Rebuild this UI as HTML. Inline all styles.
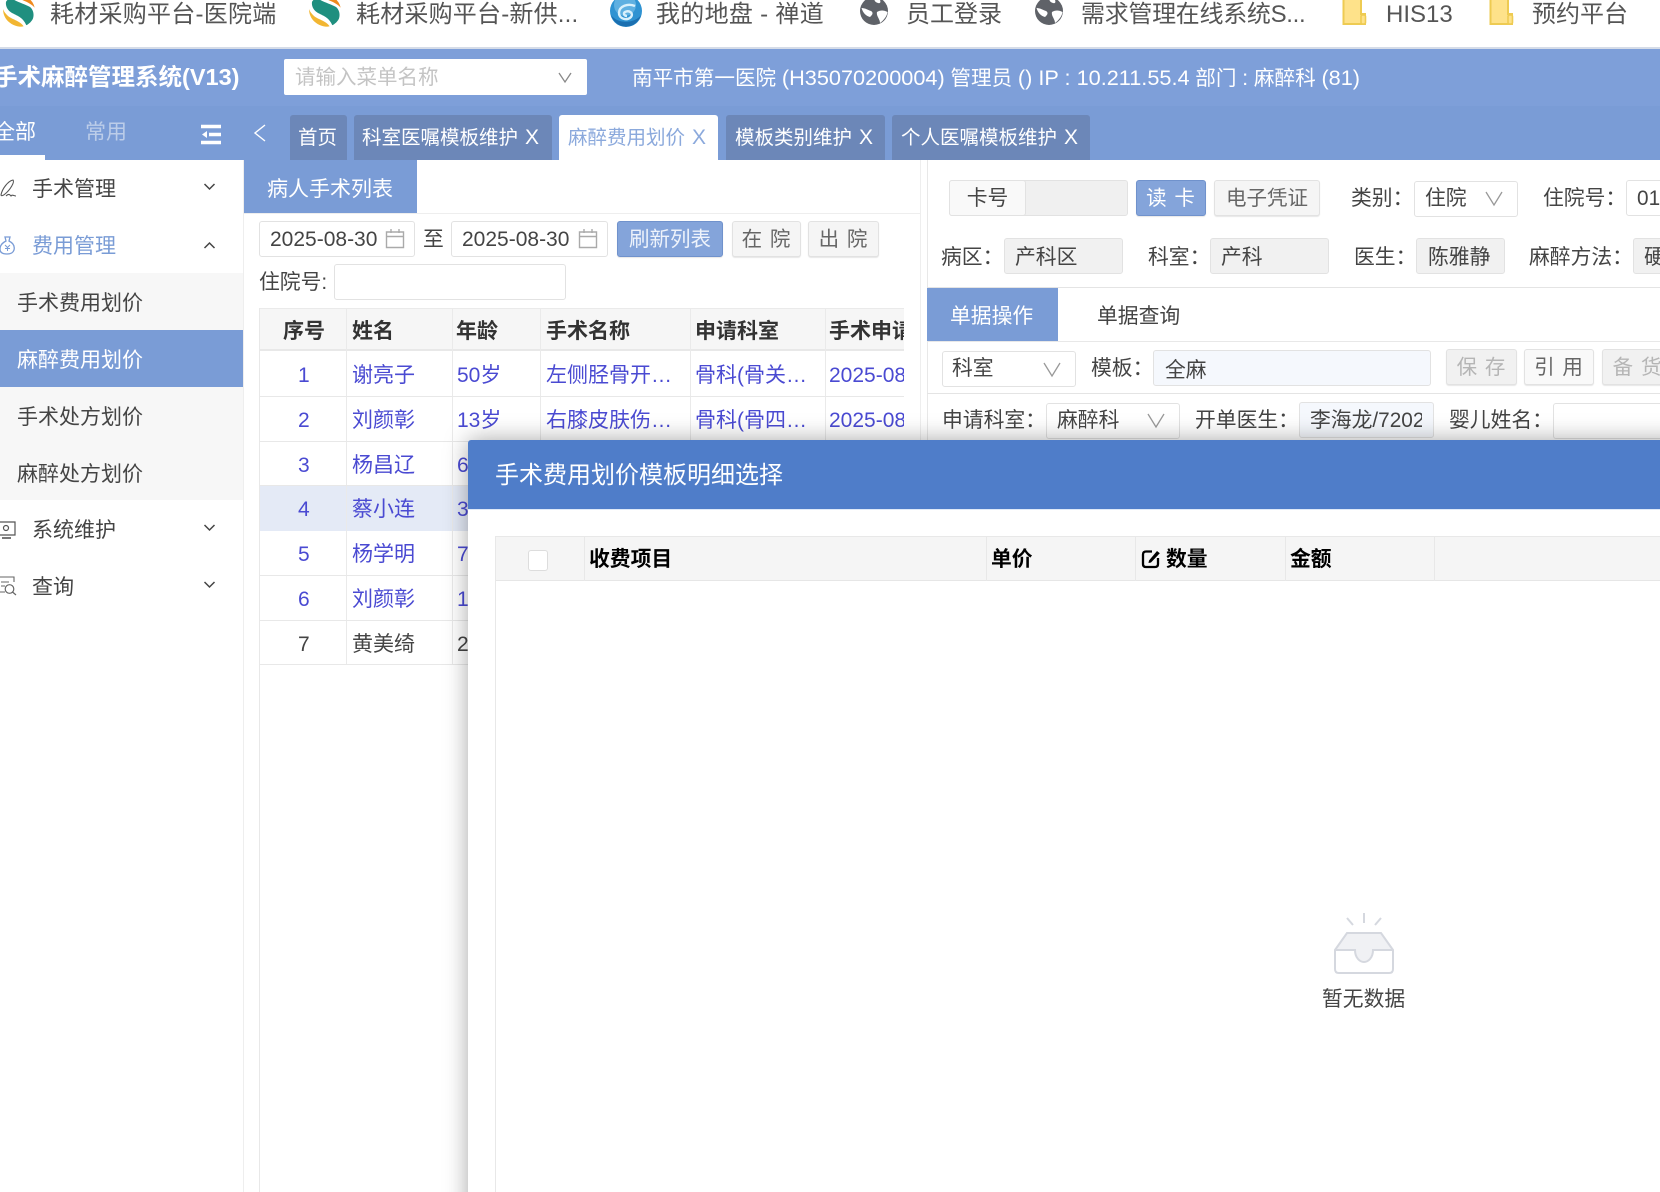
<!DOCTYPE html>
<html><head><meta charset="utf-8"><style>
*{box-sizing:border-box}
html,body{margin:0;padding:0;width:1660px;height:1192px;overflow:hidden;background:#fff}
body{position:relative;font-family:"Liberation Sans","Noto Sans CJK SC",sans-serif;font-size:20px;color:#444}
.a,.t,.b,svg{position:absolute}
.t{white-space:nowrap;line-height:30px;height:30px}
.b{border:1px solid #e2e2e2;border-radius:3px;background:#fff}
.g{background:#f1f1f1}
.f{background:#f5f8fd}
.bk{font-size:24px;color:#555;top:0}
.tab{position:absolute;top:115px;height:45px;background:#6c87b8;border-radius:3px 3px 0 0;color:#fff;line-height:32px;padding-top:7px;white-space:nowrap;font-size:19.5px}
.x{position:absolute;top:7px;font-size:21px;line-height:32px}
.th{font-weight:bold;color:#333;font-size:21px}
.c{font-size:21px;color:#4a4ad2}
.d{color:#444}
.m{font-weight:bold;color:#000;font-size:20.8px}
.s{font-size:21px;color:#444}
.l{font-size:20.8px;color:#444}
.btn{text-align:center;font-size:20.5px;line-height:35px;box-shadow:0 1px 1px rgba(0,0,0,.1);white-space:nowrap}
.la{font-size:21.7px}
</style></head><body>

<!-- bookmark bar -->
<svg style="left:3px;top:-5px" width="32" height="32" viewBox="0 0 32 32"><defs><clipPath id="cl"><circle cx="16" cy="16" r="16"/></clipPath></defs><g clip-path="url(#cl)"><rect width="32" height="32" fill="#fff"/><path d="M8 0H32V13C27 7 18 5 8 0Z" fill="#ef8a1e"/><path d="M6 1C1 6 2 14 9 18C15 21 21 23 24 32C31 27 33 17 27 12C20 8 12 7 6 1Z" fill="#1f8f7f"/><path d="M0 14C0 24 8 32 21 32C18 26 10 25 5 21C3 19 1 17 0 14Z" fill="#f2b632"/></g></svg>
<svg style="left:309px;top:-5px" width="32" height="32" viewBox="0 0 32 32"><defs><clipPath id="cm"><circle cx="16" cy="16" r="16"/></clipPath></defs><g clip-path="url(#cm)"><rect width="32" height="32" fill="#fff"/><path d="M8 0H32V13C27 7 18 5 8 0Z" fill="#ef8a1e"/><path d="M6 1C1 6 2 14 9 18C15 21 21 23 24 32C31 27 33 17 27 12C20 8 12 7 6 1Z" fill="#1f8f7f"/><path d="M0 14C0 24 8 32 21 32C18 26 10 25 5 21C3 19 1 17 0 14Z" fill="#f2b632"/></g></svg>
<svg style="left:610px;top:-5px" width="32" height="32" viewBox="0 0 32 32"><circle cx="16" cy="16" r="16" fill="#2f93d2"/><circle cx="15" cy="10" r="11" fill="#86c8ec" opacity=".55"/><path d="M25 11C18 8 9 11 9 18C9 24 17 26 21 22C24 18 19 15 15 17C13 18 14 21 17 21" fill="none" stroke="#d8f0fb" stroke-width="2.4"/><path d="M1 20A15.5 15.5 0 0 0 31 20C26 28 8 30 1 20Z" fill="#1b6fb0"/></svg>
<svg style="left:860px;top:-3px" width="28" height="28" viewBox="0 0 28 28"><circle cx="14" cy="14" r="14" fill="#5f6268"/><path d="M16 0.5C13 3 15 5 18 6C21 7 21 4 19 1ZM1.5 11C5 11 8 13 11 14C14 16 12 18 10 20C6 19 3 16 1.5 11ZM17 15C20 13 24 13 27.5 15C27 19 24 23 20 26C20 22 16 19 17 15Z" fill="#fff"/></svg>
<svg style="left:1035px;top:-3px" width="28" height="28" viewBox="0 0 28 28"><circle cx="14" cy="14" r="14" fill="#5f6268"/><path d="M16 0.5C13 3 15 5 18 6C21 7 21 4 19 1ZM1.5 11C5 11 8 13 11 14C14 16 12 18 10 20C6 19 3 16 1.5 11ZM17 15C20 13 24 13 27.5 15C27 19 24 23 20 26C20 22 16 19 17 15Z" fill="#fff"/></svg>
<svg style="left:1342px;top:-2px" width="25" height="27" viewBox="0 0 25 27"><path d="M1.5 0V26H23V16H19V0Z" fill="#fee28a" stroke="#eecb52" stroke-width="2"/><rect x="19" y="17" width="4.5" height="9" rx="1.5" fill="#fee28a" stroke="#eecb52" stroke-width="1.6"/></svg>
<svg style="left:1489px;top:-2px" width="25" height="27" viewBox="0 0 25 27"><path d="M1.5 0V26H23V16H19V0Z" fill="#fee28a" stroke="#eecb52" stroke-width="2"/><rect x="19" y="17" width="4.5" height="9" rx="1.5" fill="#fee28a" stroke="#eecb52" stroke-width="1.6"/></svg>
<div class="t bk" style="left:50px;letter-spacing:.25px">耗材采购平台-医院端</div>
<div class="t bk" style="left:356px;letter-spacing:.2px">耗材采购平台-新供...</div>
<div class="t bk" style="left:656px;letter-spacing:.3px">我的地盘 - 禅道</div>
<div class="t bk" style="left:906px">员工登录</div>
<div class="t bk" style="left:1081px;letter-spacing:-.3px">需求管理在线系统S...</div>
<div class="t bk" style="left:1386px">HIS13</div>
<div class="t bk" style="left:1532px">预约平台</div>

<!-- header -->
<div class="a" style="left:0;top:47px;width:1660px;height:2px;background:#d5dce8"></div>
<div class="a" style="left:0;top:49px;width:1660px;height:57px;background:#7e9fd9"></div>
<div class="a" style="left:0;top:106px;width:1660px;height:54px;background:#7a9cd6"></div>
<div class="t" style="left:-6px;top:62px;color:#fff;font-weight:bold;font-size:23.5px">手术麻醉管理系统(V13)</div>
<div class="a" style="left:284px;top:59px;width:303px;height:36px;background:#fff;border-radius:2px"></div>
<div class="t" style="left:295px;top:63px;color:#c4c4c4;font-size:20.5px">请输入菜单名称</div>
<svg style="left:557px;top:69px" width="16" height="16" viewBox="0 0 16 16"><path d="M2 4L8 13L14 4" fill="none" stroke="#888" stroke-width="1.3"/></svg>
<div class="t" style="left:632px;top:63px;color:#fff;font-size:20.6px">南平市第一医院 <span class="la">(H35070200004)</span> 管理员 <span class="la">() IP : 10.211.55.4</span> 部门 <span class="la">:</span> 麻醉科 <span class="la">(81)</span></div>

<!-- side tabs -->
<div class="t" style="left:-6px;top:118px;color:#fff;font-size:21px">全部</div>
<div class="t" style="left:85px;top:118px;color:#bccde9;font-size:21px">常用</div>
<div class="a" style="left:0;top:155px;width:45px;height:5px;background:#fff"></div>
<svg style="left:200px;top:124px" width="22" height="21" viewBox="0 0 22 21"><path d="M1 2.5H21M9 10.5H21M1 18.5H21" stroke="#fff" stroke-width="3.4"/><path d="M7 7V14L2 10.5Z" fill="#fff"/></svg>
<svg style="left:253px;top:124px" width="14" height="18" viewBox="0 0 14 18"><path d="M12 1L2 9L12 17" fill="none" stroke="#fff" stroke-width="1.4"/></svg>

<!-- tabs -->
<div class="tab" style="left:290px;width:57px;padding-left:8px">首页</div>
<div class="tab" style="left:354px;width:198px;padding-left:8px">科室医嘱模板维护<span class="x" style="left:171px">X</span></div>
<div class="tab" style="left:559px;width:159px;padding-left:9px;background:#fff;color:#8ba9dc">麻醉费用划价<span class="x" style="left:133px">X</span></div>
<div class="tab" style="left:726px;width:159px;padding-left:9px">模板类别维护<span class="x" style="left:133px">X</span></div>
<div class="tab" style="left:892px;width:198px;padding-left:9px">个人医嘱模板维护<span class="x" style="left:172px">X</span></div>

<!-- sidebar -->
<div class="a" style="left:243px;top:160px;width:1px;height:1032px;background:#eee"></div>
<div class="a" style="left:0;top:273px;width:243px;height:227px;background:#f7f7f7"></div>
<div class="a" style="left:0;top:330px;width:243px;height:57px;background:#7a9cd6"></div>
<svg style="left:0;top:178px" width="17" height="20" viewBox="0 0 17 20"><path d="M1 17C2 11 8 3 13 2C15 4 10 12 5 16C3 18 1 18 1 17ZM6 18C9 15 10 17 11 18C12 16 14 18 16 18" fill="none" stroke="#555" stroke-width="1.1"/></svg>
<svg style="left:-1px;top:235px" width="17" height="20" viewBox="0 0 17 20"><path d="M6 2H11L10 6C14 8 16 11 15 15C14 18 12 19 8 19C4 19 1 18 1 14C1 11 3 8 7 6Z" fill="none" stroke="#7a9cd6" stroke-width="1.3"/><path d="M6 10L8.5 12.5L11 10M8.5 12.5V16M6 13.5H11" fill="none" stroke="#7a9cd6" stroke-width="1"/></svg>
<svg style="left:0;top:520px" width="17" height="20" viewBox="0 0 17 20"><path d="M-2 2H15V15H-2Z" fill="none" stroke="#555" stroke-width="1.2"/><circle cx="6" cy="8" r="2.5" fill="none" stroke="#555" stroke-width="1.2"/><path d="M2 18H11" stroke="#555" stroke-width="1.6"/></svg>
<svg style="left:0;top:575px" width="17" height="22" viewBox="0 0 17 22"><path d="M-2 2H14V7M-2 2V17H5M1 7H9M1 11H5" fill="none" stroke="#666" stroke-width="1.1"/><circle cx="9.5" cy="14" r="4.3" fill="none" stroke="#666" stroke-width="1.2"/><path d="M12.5 17L16 20" stroke="#666" stroke-width="1.2"/></svg>
<div class="t s" style="left:32px;top:175px">手术管理</div>
<div class="t s" style="left:32px;top:232px;color:#7a9cd6">费用管理</div>
<div class="t s" style="left:17px;top:289px">手术费用划价</div>
<div class="t s" style="left:17px;top:346px;color:#fff">麻醉费用划价</div>
<div class="t s" style="left:17px;top:403px">手术处方划价</div>
<div class="t s" style="left:17px;top:460px">麻醉处方划价</div>
<div class="t s" style="left:32px;top:516px">系统维护</div>
<div class="t s" style="left:32px;top:573px">查询</div>
<svg style="left:203px;top:182px" width="13" height="10" viewBox="0 0 13 10"><path d="M1.5 2L6.5 7L11.5 2" fill="none" stroke="#444" stroke-width="1.5"/></svg>
<svg style="left:203px;top:240px" width="13" height="10" viewBox="0 0 13 10"><path d="M1.5 8L6.5 3L11.5 8" fill="none" stroke="#444" stroke-width="1.5"/></svg>
<svg style="left:203px;top:523px" width="13" height="10" viewBox="0 0 13 10"><path d="M1.5 2L6.5 7L11.5 2" fill="none" stroke="#444" stroke-width="1.5"/></svg>
<svg style="left:203px;top:580px" width="13" height="10" viewBox="0 0 13 10"><path d="M1.5 2L6.5 7L11.5 2" fill="none" stroke="#444" stroke-width="1.5"/></svg>

<!-- left panel -->
<div class="a" style="left:244px;top:160px;width:173px;height:54px;background:#7a9cd6"></div>
<div class="t" style="left:267px;top:175px;color:#fff;font-size:21px">病人手术列表</div>
<div class="a" style="left:244px;top:213px;width:676px;height:1px;background:#eee"></div>
<div class="a" style="left:920px;top:160px;width:1px;height:300px;background:#eee"></div>
<div class="a" style="left:927px;top:160px;width:1px;height:300px;background:#e8e8e8"></div>

<div class="b" style="left:259px;top:221px;width:156px;height:36px"></div>
<div class="t" style="left:270px;top:225px;font-size:21px">2025-08-30</div>
<svg style="left:385px;top:228px" width="20" height="21" viewBox="0 0 20 21"><path d="M1.5 4H18.5V19.5H1.5ZM1.5 8.5H18.5M6 1V5M14 1V5" fill="none" stroke="#aaa" stroke-width="1.4"/></svg>
<div class="t l" style="left:423px;top:225px">至</div>
<div class="b" style="left:451px;top:221px;width:157px;height:36px"></div>
<div class="t" style="left:462px;top:225px;font-size:21px">2025-08-30</div>
<svg style="left:578px;top:228px" width="20" height="21" viewBox="0 0 20 21"><path d="M1.5 4H18.5V19.5H1.5ZM1.5 8.5H18.5M6 1V5M14 1V5" fill="none" stroke="#aaa" stroke-width="1.4"/></svg>
<div class="b btn" style="left:617px;top:221px;width:106px;height:36px;background:#84a4da;border-color:#7092cc;color:#eef3fb">刷新列表</div>
<div class="b btn" style="left:732px;top:221px;width:69px;height:36px;background:#f5f5f5;color:#666;letter-spacing:1px">在 院</div>
<div class="b btn" style="left:808px;top:221px;width:71px;height:36px;background:#f5f5f5;color:#666;letter-spacing:1px">出 院</div>
<div class="t l" style="left:259px;top:268px">住院号:</div>
<div class="b" style="left:334px;top:264px;width:232px;height:36px"></div>

<!-- table -->
<div class="a" style="left:259px;top:308px;width:645px;height:43px;background:#f6f6f6;border-top:1px solid #eaeaea;border-bottom:2px solid #e8e8e8"></div>
<div class="a" style="left:259px;top:486px;width:645px;height:45px;background:#e4eaf6"></div>
<div class="a" style="left:259px;top:308px;width:1px;height:884px;background:#e8e8e8"></div>
<div class="a" style="left:346px;top:308px;width:1px;height:356px;background:#eaeaea"></div>
<div class="a" style="left:452px;top:308px;width:1px;height:356px;background:#eaeaea"></div>
<div class="a" style="left:540px;top:308px;width:1px;height:133px;background:#eaeaea"></div>
<div class="a" style="left:690px;top:308px;width:1px;height:133px;background:#eaeaea"></div>
<div class="a" style="left:825px;top:308px;width:1px;height:133px;background:#eaeaea"></div>
<div class="a" style="left:259px;top:396px;width:645px;height:1px;background:#e8e8e8"></div>
<div class="a" style="left:259px;top:441px;width:645px;height:1px;background:#e8e8e8"></div>
<div class="a" style="left:259px;top:485px;width:645px;height:1px;background:#e8e8e8"></div>
<div class="a" style="left:259px;top:575px;width:645px;height:1px;background:#e8e8e8"></div>
<div class="a" style="left:259px;top:620px;width:645px;height:1px;background:#e8e8e8"></div>
<div class="a" style="left:259px;top:664px;width:645px;height:1px;background:#e8e8e8"></div>

<div class="t th" style="left:283px;top:317px">序号</div>
<div class="t th" style="left:352px;top:317px">姓名</div>
<div class="t th" style="left:456px;top:317px">年龄</div>
<div class="t th" style="left:546px;top:317px">手术名称</div>
<div class="t th" style="left:695px;top:317px">申请科室</div>
<div class="a" style="left:829px;top:317px;width:75px;height:30px;overflow:hidden"><div class="t th" style="left:0;top:0">手术申请</div></div>

<div class="t c" style="left:298px;top:361px">1</div><div class="t c" style="left:352px;top:361px">谢亮子</div><div class="t c" style="left:457px;top:361px">50岁</div><div class="t c" style="left:546px;top:361px">左侧胫骨开…</div><div class="t c" style="left:695px;top:361px">骨科(骨关…</div>
<div class="a" style="left:829px;top:361px;width:75px;height:30px;overflow:hidden"><div class="t c" style="left:0;top:0">2025-08-30</div></div>
<div class="t c" style="left:298px;top:406px">2</div><div class="t c" style="left:352px;top:406px">刘颜彰</div><div class="t c" style="left:457px;top:406px">13岁</div><div class="t c" style="left:546px;top:406px">右膝皮肤伤…</div><div class="t c" style="left:695px;top:406px">骨科(骨四…</div>
<div class="a" style="left:829px;top:406px;width:75px;height:30px;overflow:hidden"><div class="t c" style="left:0;top:0">2025-08-30</div></div>
<div class="t c" style="left:298px;top:451px">3</div><div class="t c" style="left:352px;top:451px">杨昌辽</div><div class="t c" style="left:457px;top:451px">6</div>
<div class="t c" style="left:298px;top:495px">4</div><div class="t c" style="left:352px;top:495px">蔡小连</div><div class="t c" style="left:457px;top:495px">3</div>
<div class="t c" style="left:298px;top:540px">5</div><div class="t c" style="left:352px;top:540px">杨学明</div><div class="t c" style="left:457px;top:540px">7</div>
<div class="t c" style="left:298px;top:585px">6</div><div class="t c" style="left:352px;top:585px">刘颜彰</div><div class="t c" style="left:457px;top:585px">1</div>
<div class="t c d" style="left:298px;top:630px">7</div><div class="t c d" style="left:352px;top:630px">黄美绮</div><div class="t c d" style="left:457px;top:630px">2</div>

<!-- right panel row 1 -->
<div class="b" style="left:949px;top:180px;width:179px;height:36px;background:#f0f0f0"></div>
<div class="b" style="left:949px;top:180px;width:77px;height:36px;background:#f9f9f9;text-align:center;line-height:35px;font-size:20.8px">卡号</div>
<div class="b btn" style="left:1136px;top:180px;width:70px;height:36px;background:#84a4da;border-color:#7092cc;color:#fff;letter-spacing:1px">读 卡</div>
<div class="b btn" style="left:1214px;top:180px;width:106px;height:36px;background:#f5f5f5;color:#666">电子凭证</div>
<div class="t l" style="left:1351px;top:184px">类别：</div>
<div class="b" style="left:1414px;top:181px;width:104px;height:36px"></div>
<div class="t l" style="left:1425px;top:184px">住院</div>
<svg style="left:1485px;top:190px" width="18" height="17" viewBox="0 0 18 17"><path d="M1 2L9 15L17 2" fill="none" stroke="#999" stroke-width="1.3"/></svg>
<div class="t l" style="left:1543px;top:184px">住院号：</div>
<div class="b" style="left:1626px;top:180px;width:50px;height:36px;padding-left:10px;line-height:35px;font-size:20.8px">01</div>

<!-- row 2 -->
<div class="t l" style="left:941px;top:243px">病区：</div>
<div class="b g" style="left:1004px;top:238px;width:119px;height:36px;padding-left:10px;line-height:38px;font-size:20.8px">产科区</div>
<div class="t l" style="left:1148px;top:243px">科室：</div>
<div class="b g" style="left:1210px;top:238px;width:119px;height:36px;padding-left:10px;line-height:38px;font-size:20.8px">产科</div>
<div class="t l" style="left:1354px;top:243px">医生：</div>
<div class="b g" style="left:1416px;top:238px;width:89px;height:36px;padding-left:11px;line-height:38px;font-size:20.8px">陈雅静</div>
<div class="t l" style="left:1529px;top:243px">麻醉方法：</div>
<div class="b g" style="left:1633px;top:238px;width:60px;height:36px;padding-left:10px;line-height:38px;font-size:20.8px">硬</div>
<div class="a" style="left:927px;top:287px;width:733px;height:1px;background:#e4e4e4"></div>

<div class="a" style="left:927px;top:288px;width:131px;height:54px;background:#7a9cd6"></div>
<div class="t" style="left:950px;top:302px;color:#fff;font-size:20.8px">单据操作</div>
<div class="t" style="left:1097px;top:302px;font-size:20.8px">单据查询</div>
<div class="a" style="left:927px;top:341px;width:733px;height:1px;background:#e8e8e8"></div>

<!-- row 3 -->
<div class="b" style="left:942px;top:351px;width:134px;height:36px"></div>
<div class="t l" style="left:952px;top:354px">科室</div>
<svg style="left:1043px;top:361px" width="18" height="17" viewBox="0 0 18 17"><path d="M1 2L9 15L17 2" fill="none" stroke="#999" stroke-width="1.3"/></svg>
<div class="t l" style="left:1091px;top:354px">模板：</div>
<div class="b f" style="left:1153px;top:350px;width:278px;height:36px;padding-left:11px;line-height:39px;font-size:20.8px">全麻</div>
<div class="b btn g" style="left:1446px;top:349px;width:71px;height:36px;color:#b5b5b5;letter-spacing:1px">保 存</div>
<div class="b btn" style="left:1524px;top:349px;width:70px;height:36px;background:#f9f9f9;color:#666;letter-spacing:1px">引 用</div>
<div class="b btn g" style="left:1602px;top:349px;width:71px;height:36px;color:#b5b5b5;letter-spacing:1px">备 货</div>
<div class="a" style="left:927px;top:393px;width:733px;height:1px;background:#e4e4e4"></div>

<!-- row 4 -->
<div class="t l" style="left:942px;top:406px">申请科室：</div>
<div class="b" style="left:1046px;top:403px;width:134px;height:36px"></div>
<div class="t l" style="left:1057px;top:406px">麻醉科</div>
<svg style="left:1147px;top:412px" width="18" height="17" viewBox="0 0 18 17"><path d="M1 2L9 15L17 2" fill="none" stroke="#999" stroke-width="1.3"/></svg>
<div class="t l" style="left:1195px;top:406px">开单医生：</div>
<div class="b f" style="left:1299px;top:402px;width:135px;height:36px"></div>
<div class="a" style="left:1310px;top:406px;width:112px;height:30px;overflow:hidden"><div class="t l" style="left:0;top:0">李海龙/72021</div></div>
<div class="t l" style="left:1449px;top:406px">婴儿姓名：</div>
<div class="b" style="left:1553px;top:403px;width:130px;height:36px"></div>

<!-- modal -->
<div class="a" style="left:468px;top:440px;width:1300px;height:800px;background:#fff;box-shadow:0 0 24px rgba(0,0,0,.35);border-radius:3px 0 0 0"></div>
<div class="a" style="left:468px;top:440px;width:1192px;height:70px;background:#4f7dc9;border-radius:3px 0 0 0;border-bottom:1px solid #dfe9f7"></div>
<div class="t" style="left:495px;top:461px;color:#fff;font-size:24px">手术费用划价模板明细选择</div>

<div class="a" style="left:495px;top:536px;width:1165px;height:45px;background:#f5f5f5;border-top:1px solid #e8e8e8;border-bottom:1px solid #e6e6e6"></div>
<div class="a" style="left:495px;top:536px;width:1px;height:656px;background:#e8e8e8"></div>
<div class="a" style="left:584px;top:536px;width:1px;height:45px;background:#e8e8e8"></div>
<div class="a" style="left:986px;top:536px;width:1px;height:45px;background:#e8e8e8"></div>
<div class="a" style="left:1135px;top:536px;width:1px;height:45px;background:#e8e8e8"></div>
<div class="a" style="left:1285px;top:536px;width:1px;height:45px;background:#e8e8e8"></div>
<div class="a" style="left:1434px;top:536px;width:1px;height:45px;background:#e8e8e8"></div>
<div class="a" style="left:528px;top:550px;width:20px;height:21px;background:#fff;border:1px solid #ddd;border-radius:3px"></div>
<div class="t m" style="left:589px;top:545px">收费项目</div>
<div class="t m" style="left:991px;top:545px">单价</div>
<svg style="left:1141px;top:549px" width="20" height="20" viewBox="0 0 20 20"><path d="M11 2.5H5Q2 2.5 2 5.5V15Q2 18 5 18H14Q17 18 17 15V9" fill="none" stroke="#000" stroke-width="2.3"/><path d="M8 11.5L16 2L18.8 4.2L10 13.5L7.5 14Z" fill="#000"/></svg>
<div class="t m" style="left:1166px;top:545px">数量</div>
<div class="t m" style="left:1290px;top:545px">金额</div>

<svg style="left:1330px;top:910px" width="70" height="70" viewBox="0 0 70 70"><path d="M34 3V13M17 8L23 15M51 8L45 15" stroke="#d5d8df" stroke-width="2" fill="none"/><path d="M17 23H51L63 40H43C43 48 38 52 34 52C30 52 25 48 25 40H5Z" fill="#f0f1f4"/><path d="M5 40L17 23H51L63 40V59Q63 63 59 63H9Q5 63 5 59Z" fill="none" stroke="#d5d8df" stroke-width="2"/><path d="M5 40H25C25 48 30 52 34 52C38 52 43 48 43 40H63" fill="none" stroke="#d5d8df" stroke-width="2"/></svg>
<div class="t" style="left:1322px;top:985px;font-size:20.8px;color:#444">暂无数据</div>
</body></html>
